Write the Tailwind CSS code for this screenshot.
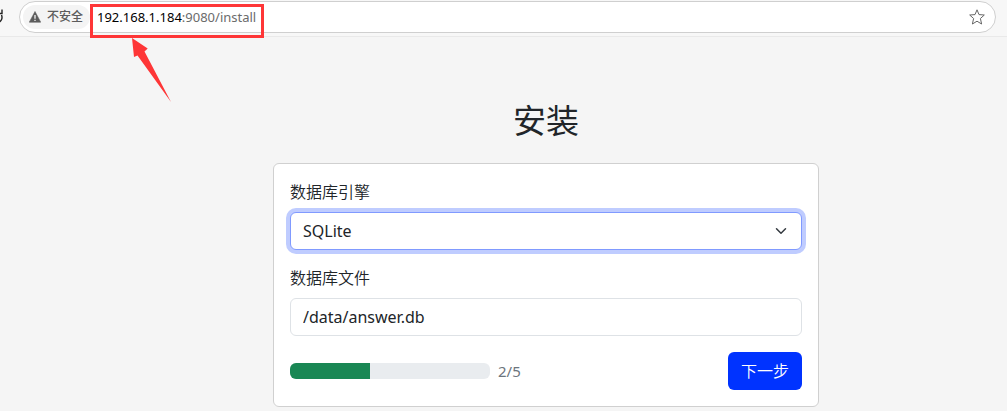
<!DOCTYPE html>
<html lang="zh-CN">
<head>
<meta charset="utf-8">
<meta name="viewport" content="width=device-width, initial-scale=1">
<title>安装</title>
<script src="https://cdn.jsdelivr.net/npm/@tailwindcss/browser@4"></script>
</head>
<body class="min-h-screen overflow-x-hidden bg-[#f5f5f5] font-['Noto_Sans','Noto_Sans_CJK_SC',sans-serif] text-base text-[#212529]">
  <header class="relative flex border-b border-[#e9e9e9] bg-[#f7f7f7] pt-px pr-[11px] pb-[3px]">
    <button type="button" aria-label="刷新" class="w-[19px] shrink-0">
      <svg class="h-8 w-[19px]" viewBox="0 0 19 32" fill="none" stroke="#222" stroke-width="1.4"><path d="M-1 12.500h3V8.500M1.500 14c1.300 3.200 0 6.500-3.500 7.500"/></svg>
    </button>
    <div class="flex h-8 min-w-0 flex-1 items-center rounded-full border border-[#cfcfcf] bg-white pr-2.5 pl-[3px]">
      <button type="button" class="flex h-6 w-[67px] shrink-0 items-center gap-1.5 rounded-full bg-[#f4f4f4] pl-1.5 text-xs text-[#5c5c5c]">
        <svg class="h-3 w-3 shrink-0" viewBox="0 0 12 12"><path d="M6 .5 11.700 11.200H.3z" fill="#5c5c5c" stroke="#5c5c5c" stroke-width=".6" stroke-linejoin="round"/><path d="M6 4v3.700M6 8.700v1.300" stroke="#fff" stroke-width="1.200"/></svg>
        <span class="whitespace-nowrap font-medium">不安全</span>
      </button>
      <a href="#" class="ml-[7px] flex-1 text-[13px] leading-5 text-black">192.168.1.184<span class="text-[#6b6b6b]">:9080/install</span></a>
      <button type="button" aria-label="收藏">
        <svg class="h-4 w-4" viewBox="0 0 16 16" fill="none" stroke="#666" stroke-width="1" stroke-linejoin="round"><path d="M8 .8 10 5.600 15.300 6 11.400 9.500 12.600 15 8 12.200 3.400 15 4.600 9.500.7 6 6 5.600z"/></svg>
      </button>
    </div>
    <div class="pointer-events-none absolute top-1 left-[90px] h-[34px] w-[174px] border-3 border-[#fe3637]"></div>
    <svg class="pointer-events-none absolute top-[38px] left-[132px] h-16 w-10" viewBox="0 0 40 64" fill="#fe3637"><path d="M0 0 15.700 10.500 12.500 13.500 39 64 5.500 17.500 2 19z"/></svg>
  </header>

  <main class="flex flex-col items-center pt-16 pb-1 pl-[85px]">
    <h1 class="mb-[22px] text-[33px] leading-10 font-normal">安装</h1>
    <form class="w-full max-w-[546px] rounded-md border border-[#d0d0d0] bg-white p-4">
      <label for="engine" class="mb-2 block leading-6 font-[350]">数据库引擎</label>
      <div class="relative mb-4">
        <select id="engine" class="block h-[38px] w-full appearance-none rounded-md border border-[#809aff] bg-white px-3 leading-6 ring-4 ring-[#bfccff] outline-none">
          <option>SQLite</option>
        </select>
        <svg class="pointer-events-none absolute top-[13px] right-[15px] h-3 w-3" viewBox="0 0 16 16" fill="none" stroke="#343a40" stroke-width="2" stroke-linecap="round" stroke-linejoin="round"><path d="m2 5 6 6 6-6"/></svg>
      </div>
      <label for="file" class="mb-2 block leading-6 font-[350]">数据库文件</label>
      <input id="file" type="text" value="/data/answer.db" class="mb-4 block h-[38px] w-full rounded-md border border-[#dee2e6] bg-white px-3 leading-6 outline-none">
      <div class="flex items-center justify-between">
        <div class="flex items-center gap-2">
          <div role="progressbar" aria-label="安装进度" aria-valuemin="0" aria-valuemax="5" aria-valuenow="2" class="h-4 w-[200px] overflow-hidden rounded-md bg-[#e9ecef]">
            <div class="h-full bg-[#198754]" style="width:40%"></div>
          </div>
          <span class="text-[15px] leading-6 text-[#6c757d]">2/5</span>
        </div>
        <button type="submit" class="h-[38px] rounded-md bg-[#0033ff] px-[13px] leading-6 font-[350] text-white">下一步</button>
      </div>
    </form>
  </main>
</body>
</html>
